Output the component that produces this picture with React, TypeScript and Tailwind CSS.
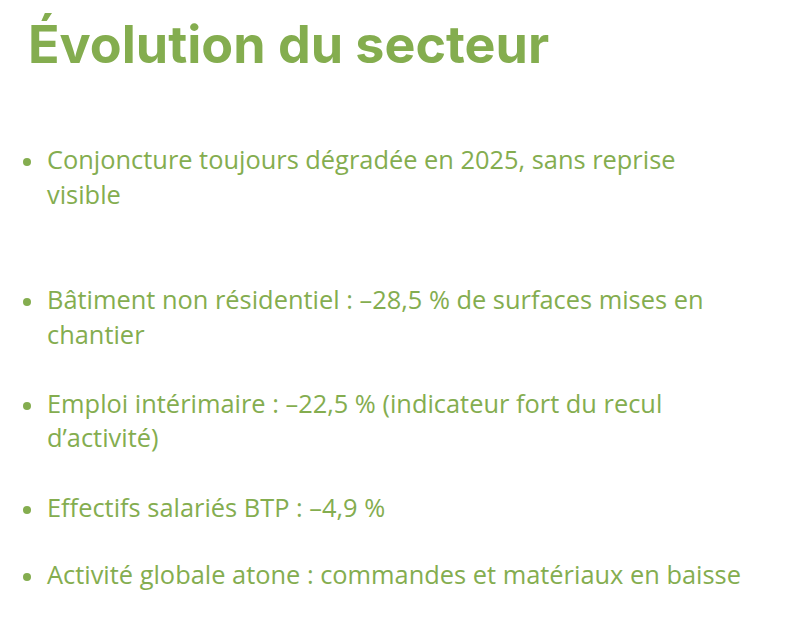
export default function App() {
  const items: { text: string; gap: string }[] = [
    { text: 'Conjoncture toujours dégradée en 2025, sans reprise visible', gap: 'mb-[71px]' },
    { text: 'Bâtiment non résidentiel : –28,5 % de surfaces mises en chantier', gap: 'mb-[34.5px]' },
    { text: 'Emploi intérimaire : –22,5 % (indicateur fort du recul d’activité)', gap: 'mb-[35px]' },
    { text: 'Effectifs salariés BTP : –4,9 %', gap: 'mb-[33px]' },
    { text: 'Activité globale atone : commandes et matériaux en baisse', gap: '' },
  ];

  return (
    <div className="w-[800px] h-[644px] bg-white text-[#84ad4f] overflow-hidden">
      <h1 className="pl-[28px] pt-[15px] font-['Inter',sans-serif] font-bold text-[52px] leading-[60px]">
        Évolution du secteur
      </h1>
      <ul className="mt-[67px] pl-[23px] w-[748px] font-['Open_Sans',sans-serif] text-[25.4px] leading-[34.5px]">
        {items.map((item) => (
          <li key={item.text} className={`flex ${item.gap}`}>
            <span className="w-2 h-2 mt-[16px] shrink-0 rounded-full bg-[#84ad4f]" />
            <span className="ml-[16px]">{item.text}</span>
          </li>
        ))}
      </ul>
    </div>
  );
}
